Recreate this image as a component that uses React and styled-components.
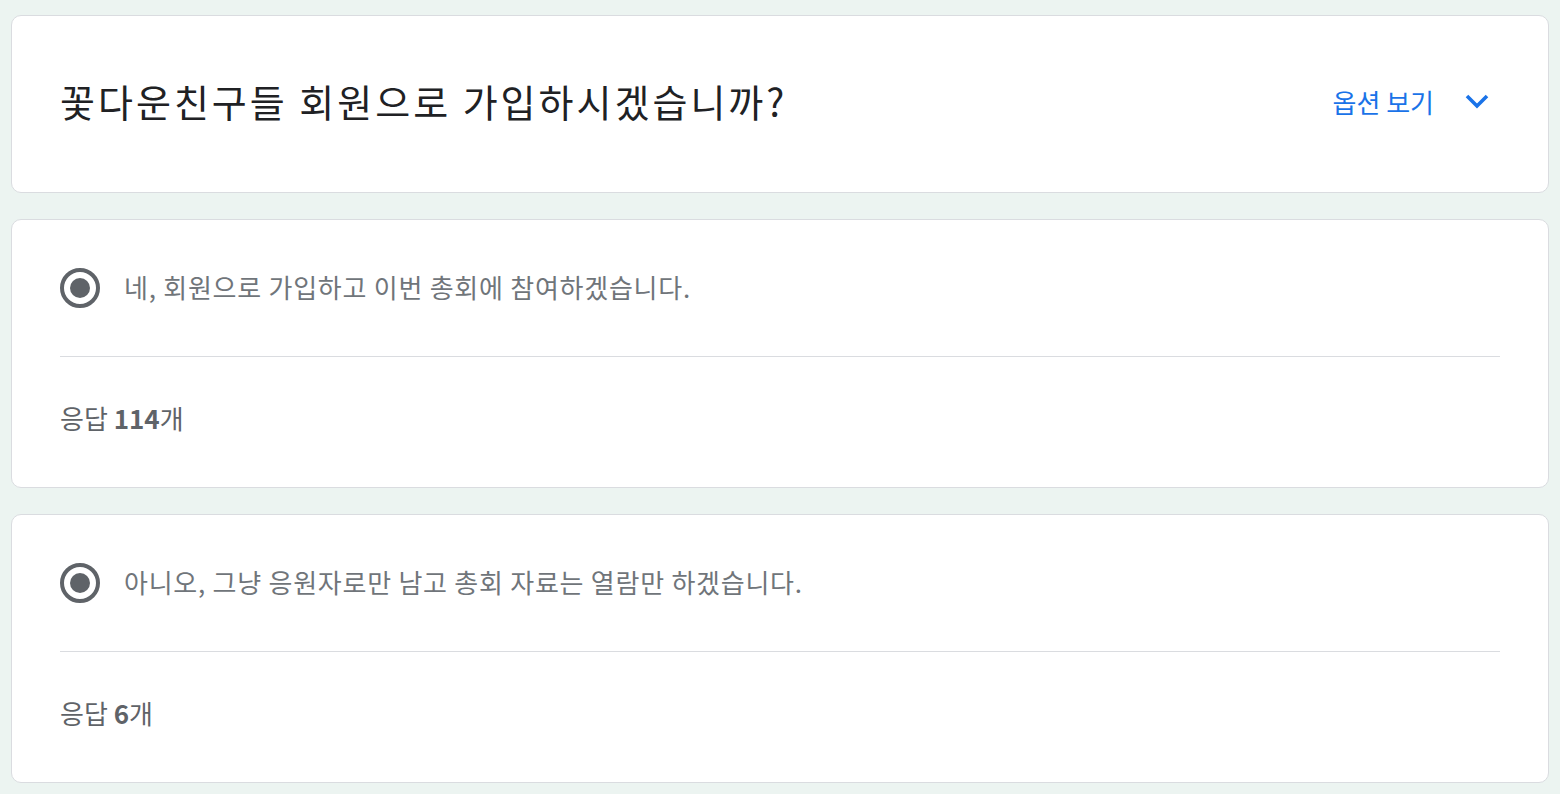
import styled, { createGlobalStyle } from "styled-components"

const GlobalStyle = createGlobalStyle`
    * { box-sizing: border-box; }
    body {
        margin: 0;
        background: #ecf4f1;
        font-family: "Noto Sans CJK KR", "Noto Sans", sans-serif;
    }
`

const options = [
    { label: "네, 회원으로 가입하고 이번 총회에 참여하겠습니다.", count: 114 },
    { label: "아니오, 그냥 응원자로만 남고 총회 자료는 열람만 하겠습니다.", count: 6 },
]

const Page = styled.div`
    display: flex;
    flex-direction: column;
    gap: 26px;
    padding: 15px 11px 10px 11px;
`

const Card = styled.div`
    background: #fff;
    border: 1px solid #dadce0;
    border-radius: 10px;
`

const Header = styled(Card)`
    display: flex;
    align-items: center;
    justify-content: space-between;
    height: 178px;
    padding: 0 59px 0 48px;
`

const Title = styled.h1`
    margin: 0;
    font-size: 38px;
    font-weight: 400;
    letter-spacing: 3px;
    color: #202124;
    line-height: 48px;
    padding-bottom: 6px;
`

const Toggle = styled.div`
    display: flex;
    align-items: center;
    gap: 31px;
    color: #1a73e8;
    font-size: 26px;
    padding-bottom: 6px;
`

const OptionCard = styled(Card)`
    padding: 48px 48px 51px 48px;
`

const OptionRow = styled.div`
    display: flex;
    align-items: center;
    gap: 24px;
    height: 40px;
`

const Radio = styled.span`
    flex: none;
    width: 40px;
    height: 40px;
    border: 4px solid #5f6368;
    border-radius: 50%;
    display: flex;
    align-items: center;
    justify-content: center;

    &::after {
        content: "";
        width: 20px;
        height: 20px;
        border-radius: 50%;
        background: #5f6368;
    }
`

const OptionLabel = styled.span`
    font-size: 26px;
    letter-spacing: 0.75px;
    color: #70757a;
    padding-bottom: 4px;
`

const Divider = styled.hr`
    margin: 48px 0 0 0;
    border: 0;
    height: 1px;
    background: #dadce0;
`

const Count = styled.div`
    margin-top: 43px;
    line-height: 36px;
    font-size: 26px;
    color: #5f6368;

    b { font-weight: 700; }
`

function Chevron() {
    return (
        <svg width="24" height="16" viewBox="0 0 24 16">
            <polyline points="2,3 12,13 22,3" fill="none" stroke="#1a73e8" strokeWidth="3.6" />
        </svg>
    )
}

export default function App() {
    return (
        <>
            <GlobalStyle />
            <Page>
                <Header>
                    <Title>꽃다운친구들 회원으로 가입하시겠습니까?</Title>
                    <Toggle>
                        <span>옵션 보기</span>
                        <Chevron />
                    </Toggle>
                </Header>
                {options.map((o, i) => (
                    <OptionCard key={i}>
                        <OptionRow>
                            <Radio />
                            <OptionLabel>{o.label}</OptionLabel>
                        </OptionRow>
                        <Divider />
                        <Count>응답 <b>{o.count}</b>개</Count>
                    </OptionCard>
                ))}
            </Page>
        </>
    )
}
